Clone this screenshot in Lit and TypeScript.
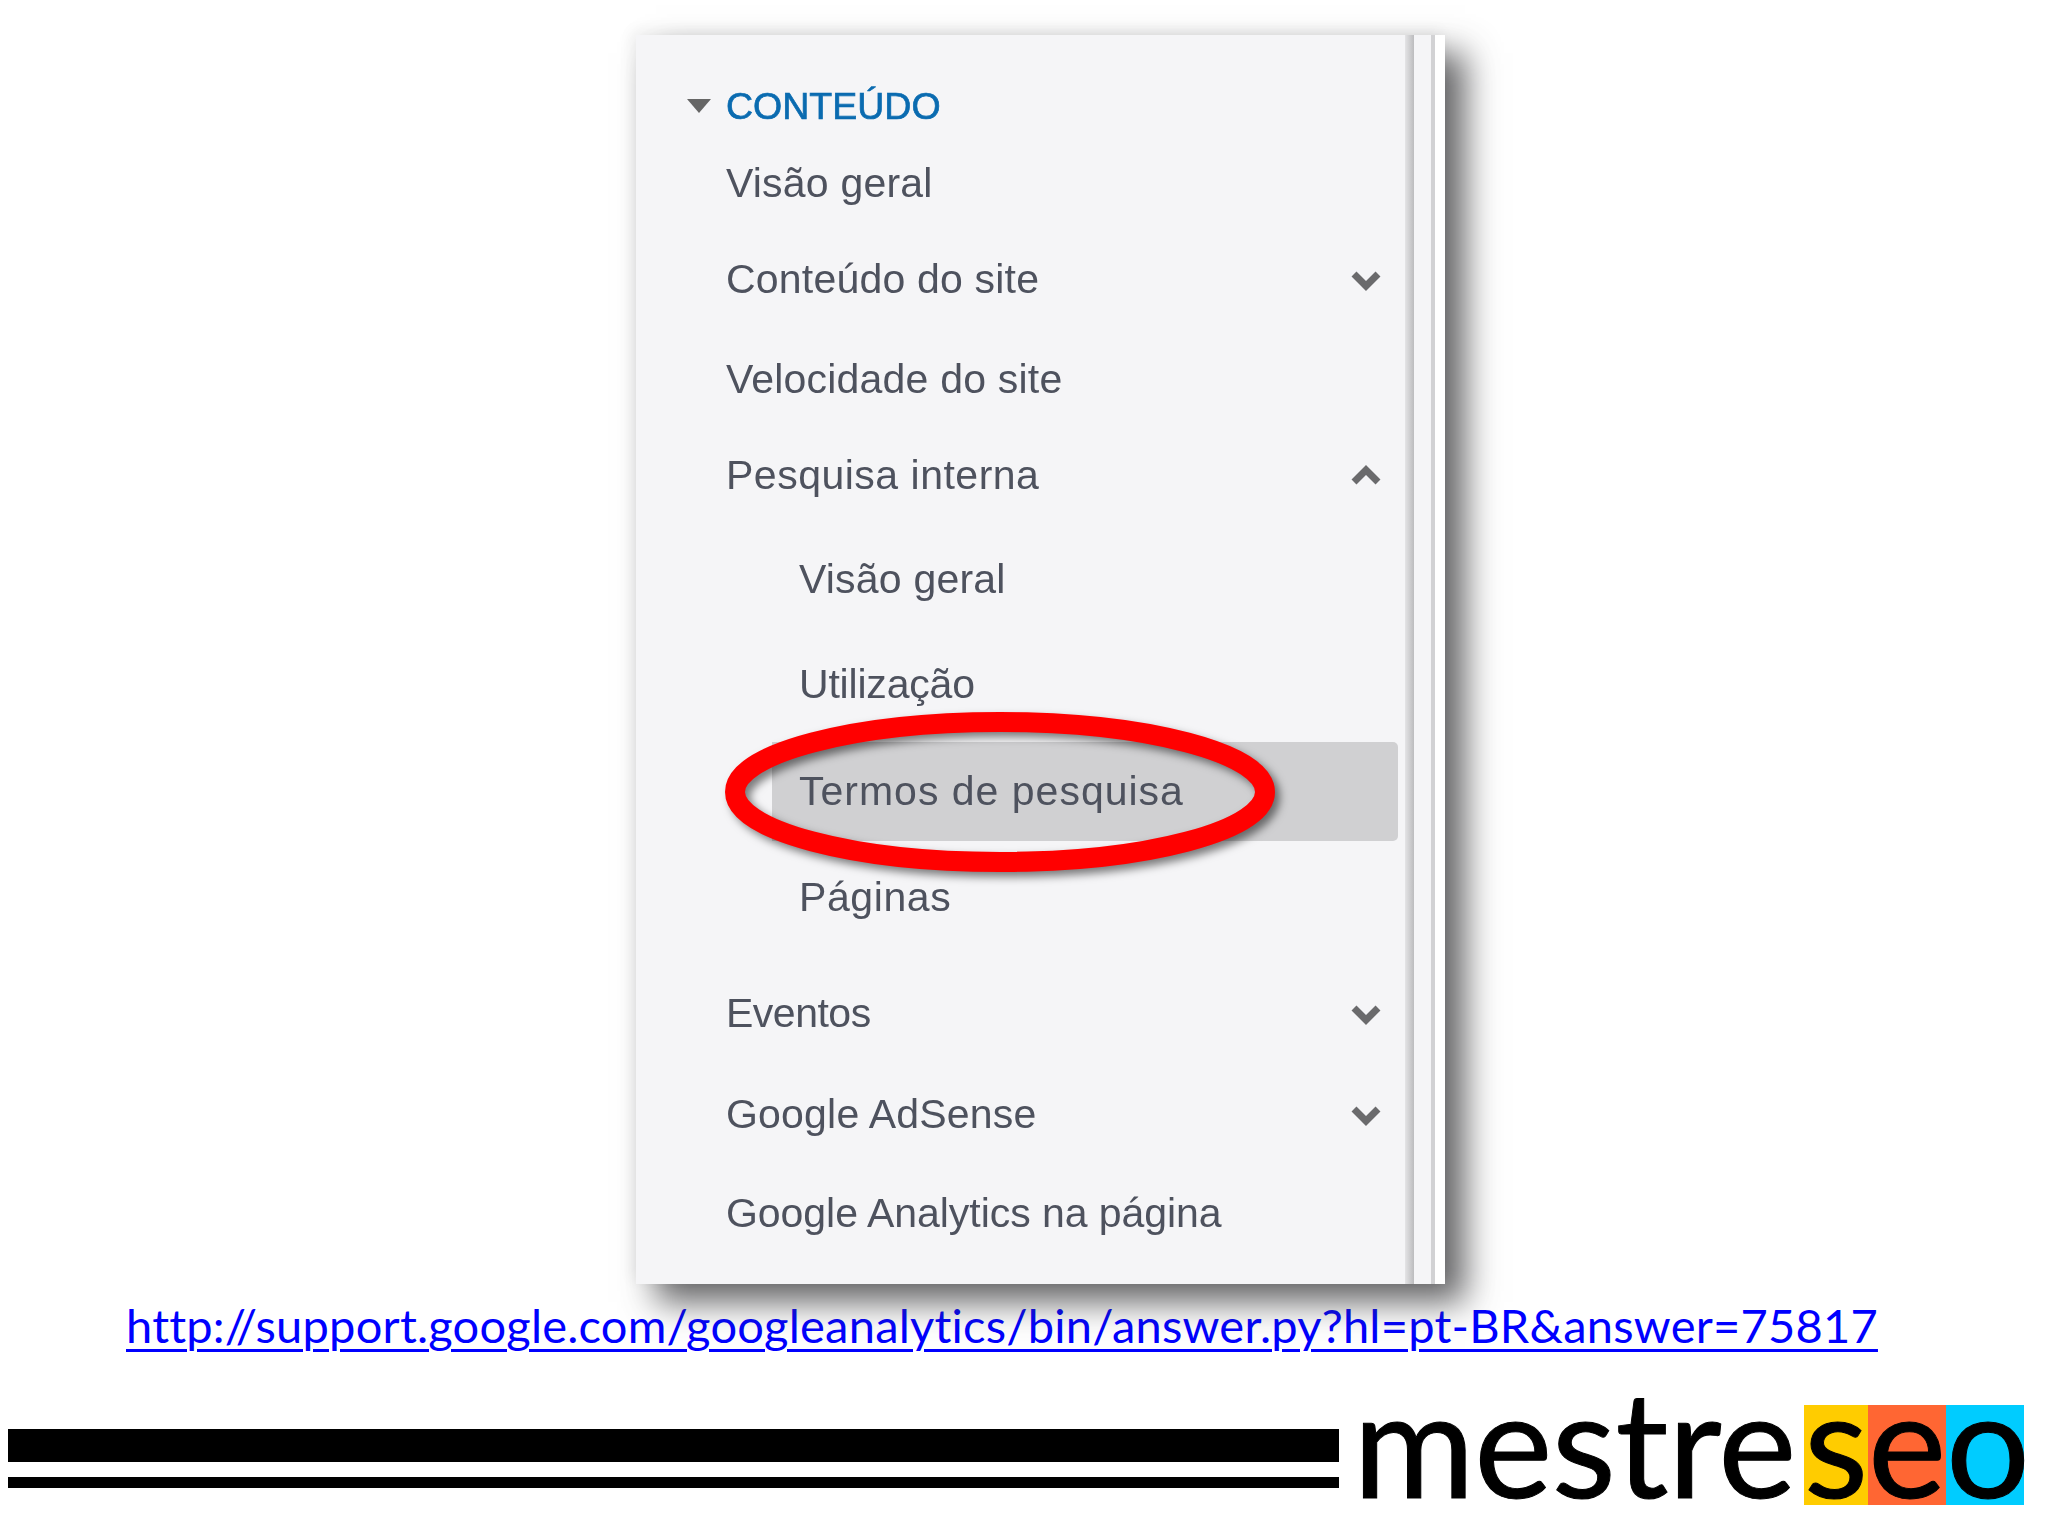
import { LitElement, html, css, svg } from 'lit'
import { customElement } from 'lit/decorators.js'

interface Row {
  label: string
  h: number
  sub?: boolean
  selected?: boolean
  chevron?: 'up' | 'down'
  ls?: number
}

// heights come from the row centres in the reference
const rows: Row[] = [
  { label: 'Visão geral', h: 70 },
  { label: 'Conteúdo do site', h: 122, chevron: 'down' },
  { label: 'Velocidade do site', h: 78 },
  { label: 'Pesquisa interna', h: 114, chevron: 'up', ls: 0.5 },
  { label: 'Visão geral', h: 94, sub: true },
  { label: 'Utilização', h: 116, sub: true, ls: -0.2 },
  { label: 'Termos de pesquisa', h: 99, sub: true, selected: true, ls: 1 },
  { label: 'Páginas', h: 112, sub: true, ls: 0.6 },
  { label: 'Eventos', h: 120, chevron: 'down', ls: -0.5 },
  { label: 'Google AdSense', h: 82, chevron: 'down' },
  { label: 'Google Analytics na página', h: 116, ls: -0.05 },
]

@customElement('app-root')
export class AppRoot extends LitElement {
  static styles = css`
    :host {
      display: block;
    }

    .slide {
      position: relative;
      width: 2048px;
      height: 1536px;
      background: #fff;
      display: flex;
      flex-direction: column;
    }

    .panel {
      position: relative;
      display: flex;
      width: 809px;
      height: 1249px;
      margin: 35px 0 0 636px;
      box-shadow: 20px 18px 32px rgba(60, 60, 62, 0.8), -4px -4px 14px rgba(0, 0, 0, 0.06);
      background: #fff;
      flex: none;
    }

    .nav {
      width: 769px;
      padding-top: 29px;
      box-sizing: border-box;
      background: #f5f5f7;
      font-family: 'Liberation Sans', Arial, sans-serif;
      font-size: 41px;
      color: #4e525e;
    }

    .heading {
      display: flex;
      align-items: center;
      height: 84px;
      padding-left: 51px;
      font-size: 37.5px;
      color: #0a6bb0;
      -webkit-text-stroke: 0.7px #0a6bb0;
      filter: blur(0.5px);
    }

    .heading svg {
      width: 24px;
      height: 14px;
      margin-right: 15px;
    }

    .row {
      display: flex;
      align-items: center;
      justify-content: space-between;
      box-sizing: border-box;
      margin-left: 90px;
      margin-right: 7px;
      padding-right: 16px;
    }

    .row span {
      filter: blur(0.6px);
    }

    .row.sub {
      margin-left: 136px;
      padding-left: 27px;
    }

    .row.selected {
      background: #d0d0d2;
      border-radius: 0 5px 5px 0;
    }

    .row svg {
      width: 32px;
      height: 22px;
      margin-top: 2px;
    }

    .divider {
      width: 9px;
      background: linear-gradient(90deg, #e4e4e6, #bcbcbe);
    }

    .gutter {
      width: 17px;
      background: #f5f5f7;
    }

    .edge {
      width: 4px;
      background: #d2d2d4;
    }

    .ring {
      position: absolute;
      left: 725px;
      top: 712px;
      width: 550px;
      height: 160px;
      overflow: visible;
      filter: drop-shadow(5px 5px 4px rgba(0, 0, 0, 0.5));
    }

    .link {
      margin: 13px 0 0 126px;
      width: 1752px;
      font-family: Lato, 'Open Sans', sans-serif;
      font-size: 47px;
      font-variant-ligatures: none;
      letter-spacing: 0.23px;
      line-height: 56px;
      white-space: nowrap;
      color: #0000ff;
      text-decoration: underline;
      text-decoration-thickness: 3px;
      text-underline-offset: 6px;
      flex: none;
    }

    .footer {
      display: flex;
      align-items: flex-start;
      margin-top: 52px;
      padding-left: 8px;
    }

    .bars {
      display: flex;
      flex-direction: column;
      width: 1331px;
      margin-top: 24px;
    }

    .bar-thick {
      height: 33px;
      background: #000;
    }

    .bar-thin {
      height: 11px;
      margin-top: 15px;
      background: #000;
    }

    /* the line box is taller than the colour boxes, so it starts above the footer */
    .logo {
      display: flex;
      margin: -53px 0 0 14px;
      font-family: Lato, 'Open Sans', sans-serif;
      font-size: 148px;
      color: #000;
      -webkit-text-stroke: 1px #000;
    }

    .mestre {
      width: 451px;
      letter-spacing: -0.5px;
      white-space: nowrap;
    }

    .box {
      display: block;
      background-repeat: no-repeat;
      background-position: 0 53px;
      background-size: 100% 100px;
    }

    .s { width: 64px; background-image: linear-gradient(#ffcc00, #ffcc00); letter-spacing: -1px; }
    .e { width: 78px; background-image: linear-gradient(#ff6633, #ff6633); letter-spacing: -4px; }
    .o { width: 78px; background-image: linear-gradient(#00ccff, #00ccff); letter-spacing: -10px; }
  `

  private chevron(dir: 'up' | 'down') {
    const d = dir === 'down' ? 'M4 5 L16 17 L28 5' : 'M4 17 L16 5 L28 17'
    return html`<svg viewBox="0 0 32 22" fill="none" stroke="#6a6a6c" stroke-width="7">${svg`<path d=${d} />`}</svg>`
  }

  render() {
    return html`
      <div class="slide">
        <div class="panel">
          <div class="nav">
            <div class="heading">
              <svg viewBox="0 0 24 14"><path d="M0 0 H24 L12 14 Z" fill="#666" /></svg>
              <span>CONTEÚDO</span>
            </div>
            ${rows.map(
              (r) => html`
                <div
                  class="row ${r.sub ? 'sub' : ''} ${r.selected ? 'selected' : ''}"
                  style="height:${r.h}px"
                >
                  <span style="letter-spacing:${r.ls ?? 0.2}px">${r.label}</span>
                  ${r.chevron ? this.chevron(r.chevron) : ''}
                </div>
              `
            )}
          </div>
          <div class="divider"></div>
          <div class="gutter"></div>
          <div class="edge"></div>
        </div>
        <div class="link">http://support.google.com/googleanalytics/bin/answer.py?hl=pt-BR&amp;answer=75817</div>
        <div class="footer">
          <div class="bars">
            <div class="bar-thick"></div>
            <div class="bar-thin"></div>
          </div>
          <div class="logo">
            <span class="mestre">mestre</span>
            <span class="box s">s</span>
            <span class="box e">e</span>
            <span class="box o">o</span>
          </div>
        </div>
        <svg class="ring" viewBox="0 0 550 160">
          <ellipse cx="275" cy="80" rx="265" ry="70" fill="none" stroke="#ff0000" stroke-width="20" />
        </svg>
      </div>
    `
  }
}
